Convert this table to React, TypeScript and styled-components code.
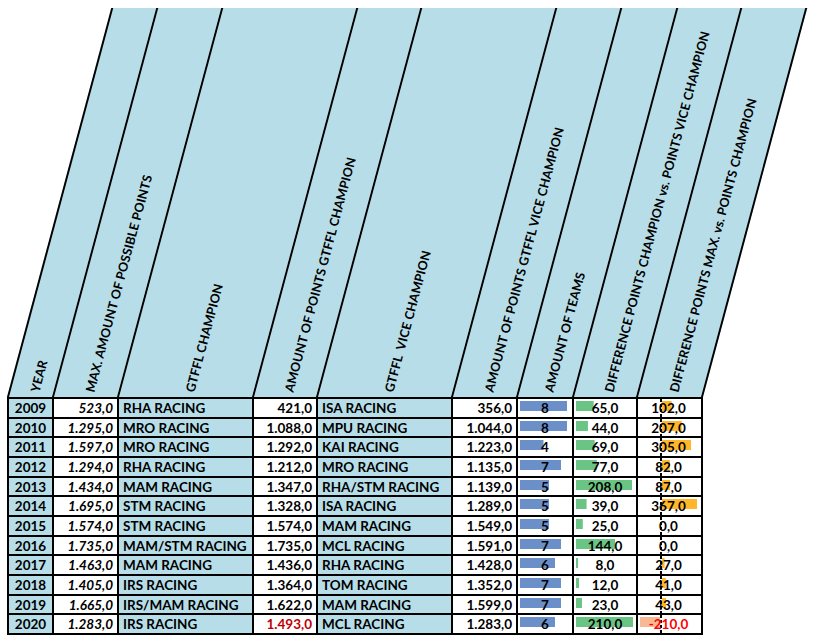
import React from 'react'
import styled, { createGlobalStyle, css } from 'styled-components'

const GlobalStyle = createGlobalStyle`
  body {
    margin: 0;
    padding: 8px 0 0 7px;
    background: #fff;
    font-family: Lato, 'Liberation Sans', sans-serif;
    color: #000;
  }
`

const BLUE = '#b7dee8'
const COLS = [43, 63, 133, 62, 133, 63, 54, 62, 63]
const HEAD_H = 389

const Sheet = styled.div`
  width: fit-content;
`

const Header = styled.div`
  display: flex;
  height: ${HEAD_H}px;
  transform-origin: 0 100%;
  transform: skewX(-15deg);
`

const HeadCell = styled.div<{ $w: number; $last?: boolean }>`
  flex: none;
  box-sizing: border-box;
  width: ${({ $w, $last }) => $w + ($last ? 4 : 2)}px;
  border-left: 2px solid #000;
  ${({ $last }) =>
    $last &&
    css`
      border-right: 2px solid #000;
    `}
  background: ${BLUE};
  display: flex;
  flex-direction: column;
  justify-content: flex-end;
  align-items: center;
  padding-bottom: 5px;
`

const Anchor = styled.div`
  width: 0;
  height: 0;
  margin-left: 6px;
`

const HeadLabel = styled.div`
  width: max-content;
  margin-top: -7px;
  line-height: 14px;
  font-size: 12.6px;
  letter-spacing: 0.1px;
  font-weight: 700;
  white-space: pre;
  transform-origin: 0 50%;
  transform: skewX(15deg) rotate(-75deg);
`

const Grid = styled.div`
  display: grid;
  grid-template-columns: ${COLS.map((c) => `${c}px`).join(' ')};
  grid-auto-rows: 17.67px;
  gap: 2px;
  border: 2px solid #000;
  background: #000;
  width: fit-content;
`

const Cell = styled.div`
  display: flex;
  align-items: center;
  font-size: 13.5px;
  font-weight: 700;
  line-height: 1;
  white-space: nowrap;
  overflow: hidden;
  background: #fff;
  padding: 2px 4px 0;
`

const YearCell = styled(Cell)`
  background: ${BLUE};
  justify-content: center;
`

const MaxCell = styled(Cell)`
  justify-content: flex-end;
  font-style: italic;
`

const NameCell = styled(Cell)`
  background: ${BLUE};
`

const PointsCell = styled(Cell)<{ $red?: boolean }>`
  justify-content: flex-end;
  color: ${({ $red }) => ($red ? '#c00000' : '#000')};
`

const BarCell = styled(Cell)<{ $bar: number; $color: string }>`
  justify-content: center;
  background-color: #fff;
  background-image: linear-gradient(${({ $color }) => `${$color}, ${$color}`});
  background-repeat: no-repeat;
  background-size: ${({ $bar }) => `${$bar}px 10px`};
  background-position: 2px 2px;
`

const AXIS = 22

const AxisCell = styled(Cell)<{ $value: number }>`
  justify-content: center;
  padding-left: 2px;
  color: ${({ $value }) => ($value < 0 ? '#ff0000' : '#000')};
  background-color: #fff;
  background-image: linear-gradient(#000 0 3px, transparent 3px 5px),
    linear-gradient(
      ${({ $value }) => ($value < 0 ? '#f9b894, #f9b894' : '#ffb628, #ffb628')}
    );
  background-repeat: repeat-y, no-repeat;
  background-size: ${({ $value }) =>
    `2px 5px, ${Math.abs($value / 367) * 35}px 10px`};
  background-position: ${({ $value }) =>
    `${AXIS}px 0, ${$value < 0 ? AXIS - (Math.abs($value) / 367) * 35 : AXIS + 2}px 2px`};
`

const headings = [
  'YEAR',
  'MAX. AMOUNT OF POSSIBLE POINTS',
  'GTFFL CHAMPION',
  'AMOUNT OF POINTS GTFFL CHAMPION',
  'GTFFL  VICE CHAMPION',
  'AMOUNT OF POINTS GTFFL VICE CHAMPION',
  'AMOUNT OF TEAMS',
  'DIFFERENCE POINTS CHAMPION vs. POINTS VICE CHAMPION',
  'DIFFERENCE POINTS MAX. vs. POINTS CHAMPION',
]

interface Season {
  year: number
  max: number
  champion: string
  champPoints: number
  vice: string
  vicePoints: number
  teams: number
}

const seasons: Season[] = [
  { year: 2009, max: 523, champion: 'RHA RACING', champPoints: 421, vice: 'ISA RACING', vicePoints: 356, teams: 8 },
  { year: 2010, max: 1295, champion: 'MRO RACING', champPoints: 1088, vice: 'MPU RACING', vicePoints: 1044, teams: 8 },
  { year: 2011, max: 1597, champion: 'MRO RACING', champPoints: 1292, vice: 'KAI RACING', vicePoints: 1223, teams: 4 },
  { year: 2012, max: 1294, champion: 'RHA RACING', champPoints: 1212, vice: 'MRO RACING', vicePoints: 1135, teams: 7 },
  { year: 2013, max: 1434, champion: 'MAM RACING', champPoints: 1347, vice: 'RHA/STM RACING', vicePoints: 1139, teams: 5 },
  { year: 2014, max: 1695, champion: 'STM RACING', champPoints: 1328, vice: 'ISA RACING', vicePoints: 1289, teams: 5 },
  { year: 2015, max: 1574, champion: 'STM RACING', champPoints: 1574, vice: 'MAM RACING', vicePoints: 1549, teams: 5 },
  { year: 2016, max: 1735, champion: 'MAM/STM RACING', champPoints: 1735, vice: 'MCL RACING', vicePoints: 1591, teams: 7 },
  { year: 2017, max: 1463, champion: 'MAM RACING', champPoints: 1436, vice: 'RHA RACING', vicePoints: 1428, teams: 6 },
  { year: 2018, max: 1405, champion: 'IRS RACING', champPoints: 1364, vice: 'TOM RACING', vicePoints: 1352, teams: 7 },
  { year: 2019, max: 1665, champion: 'IRS/MAM RACING', champPoints: 1622, vice: 'MAM RACING', vicePoints: 1599, teams: 7 },
  { year: 2020, max: 1283, champion: 'IRS RACING', champPoints: 1493, vice: 'MCL RACING', vicePoints: 1283, teams: 6 },
]

// german style: 1.234,0
const fmt = (n: number) => {
  const sign = n < 0 ? '-' : ''
  const int = Math.abs(Math.round(n))
    .toString()
    .replace(/\B(?=(\d{3})+(?!\d))/g, '.')
  return `${sign}${int},0`
}

const App: React.FC = () => {
  return (
    <Sheet>
      <GlobalStyle />
      <Header>
        {headings.map((h, i) => (
          <HeadCell key={h} $w={COLS[i]} $last={i === headings.length - 1}>
            <Anchor>
              <HeadLabel>{h}</HeadLabel>
            </Anchor>
          </HeadCell>
        ))}
      </Header>
      <Grid>
        {seasons.map((s) => {
          const diff = s.champPoints - s.vicePoints
          const diffMax = s.max - s.champPoints
          return (
            <React.Fragment key={s.year}>
              <YearCell>{s.year}</YearCell>
              <MaxCell>{fmt(s.max)}</MaxCell>
              <NameCell>{s.champion}</NameCell>
              <PointsCell $red={s.champPoints > s.max}>{fmt(s.champPoints)}</PointsCell>
              <NameCell>{s.vice}</NameCell>
              <PointsCell>{fmt(s.vicePoints)}</PointsCell>
              <BarCell $bar={(s.teams / 8) * 47} $color="#6a8fc9">
                {s.teams}
              </BarCell>
              <BarCell $bar={(diff / 210) * 57} $color="#6ac483">
                {fmt(diff)}
              </BarCell>
              <AxisCell $value={diffMax}>{fmt(diffMax)}</AxisCell>
            </React.Fragment>
          )
        })}
      </Grid>
    </Sheet>
  )
}

export default App
